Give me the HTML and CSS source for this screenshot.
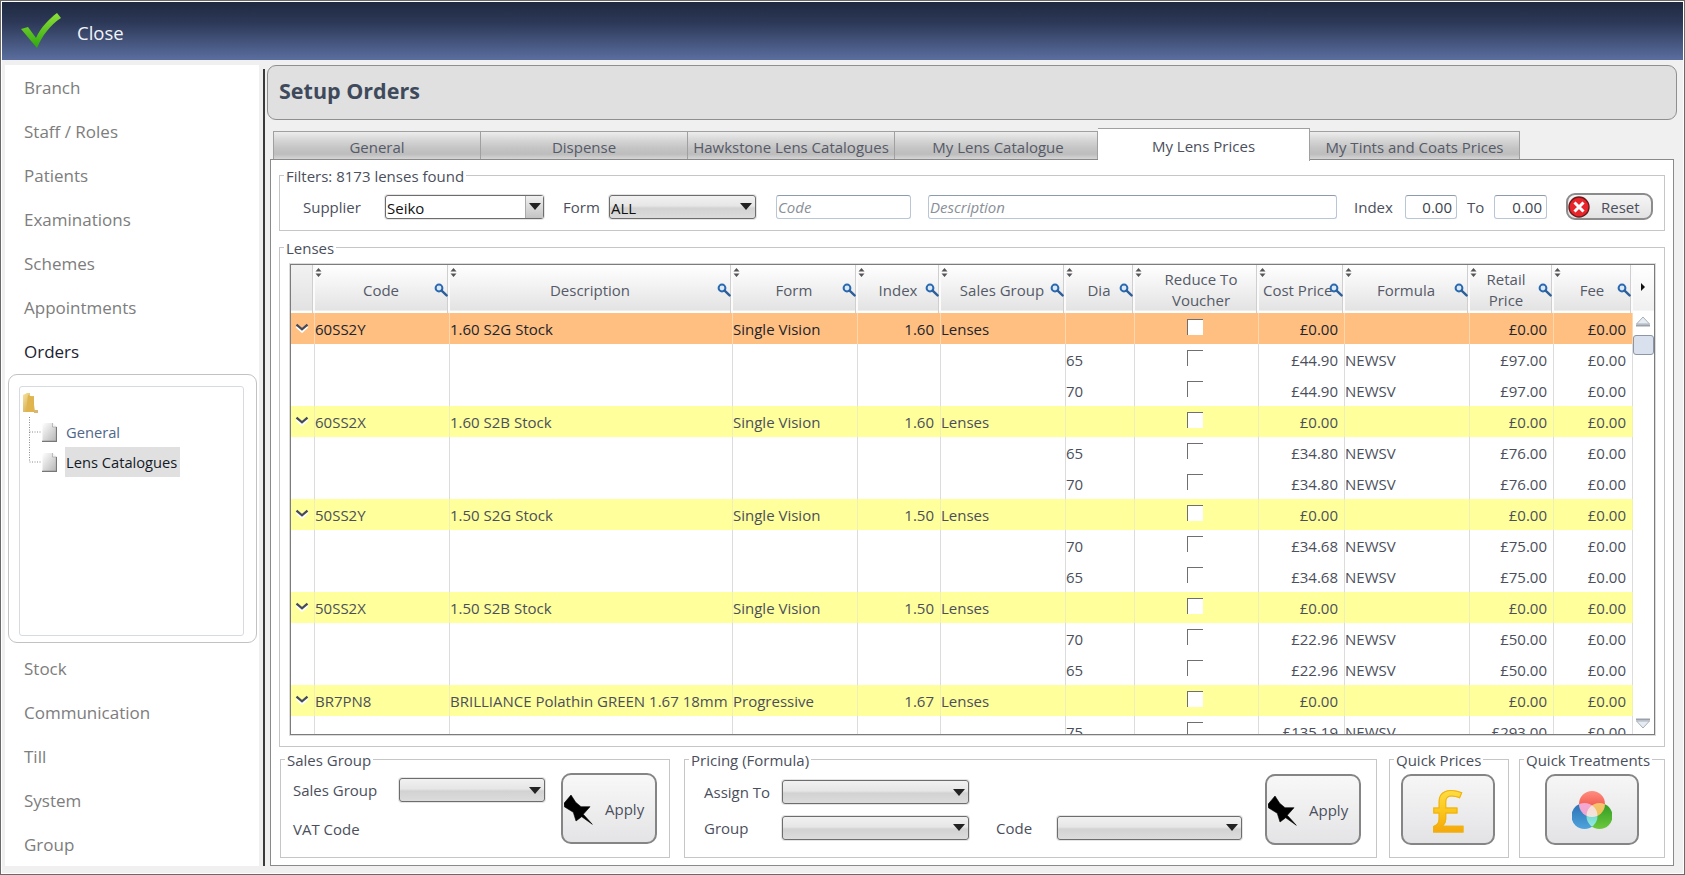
FILE: index.html
```html
<!DOCTYPE html>
<html lang="en">
<head>
<meta charset="utf-8">
<title>Setup Orders</title>
<link rel="stylesheet" href="styles.css">
</head>
<body>
<svg class="defs" width="0" height="0" aria-hidden="true">
  <defs>
    <linearGradient id="g-check" x1="0" y1="0" x2="0" y2="1"><stop offset="0" stop-color="#8fe03a"/><stop offset="1" stop-color="#2fa80c"/></linearGradient>
    <linearGradient id="g-folder" x1="0" y1="0" x2="1" y2="1"><stop offset="0" stop-color="#f8e3a0"/><stop offset="1" stop-color="#c99a35"/></linearGradient>
    <linearGradient id="g-doc" x1="0" y1="0" x2="1" y2="1"><stop offset="0" stop-color="#ffffff"/><stop offset="1" stop-color="#b4b4b4"/></linearGradient>
    <linearGradient id="g-red" x1="0" y1="0" x2="0" y2="1"><stop offset="0" stop-color="#ff8d80"/><stop offset="1" stop-color="#e8392f"/></linearGradient>
    <linearGradient id="g-blue" x1="0" y1="0" x2="0" y2="1"><stop offset="0" stop-color="#2a6fb5"/><stop offset="1" stop-color="#4ea4dc"/></linearGradient>
    <linearGradient id="g-green" x1="0" y1="0" x2="0" y2="1"><stop offset="0" stop-color="#2f9a22"/><stop offset="1" stop-color="#6cc83e"/></linearGradient>
    <symbol id="i-mag" viewBox="0 0 14 14"><circle cx="5" cy="5" r="3.4" fill="#dbe9f7" stroke="#2a69b0" stroke-width="2"/><path d="M7.6 7.6 L12.6 12.4" stroke="#2d5f9a" stroke-width="2.4" stroke-linecap="round"/></symbol>
    <symbol id="i-sort" viewBox="0 0 7 9"><path d="M3.5 0 L6.5 3.4 H0.5 Z M0.5 5.4 H6.5 L3.5 9 Z" fill="#555"/></symbol>
    <symbol id="i-chev" viewBox="0 0 14 10"><path d="M1.5 3.6 L7 8.6 L12.5 3.6" fill="none" stroke="#fff" stroke-width="2.4"/><path d="M1.5 1.6 L7 6.4 L12.5 1.6" fill="none" stroke="#454a5a" stroke-width="2.2"/></symbol>
    <symbol id="i-doc" viewBox="0 0 15 20"><path d="M0.5 1 H10.5 L14.5 5 V19.5 H0.5 Z" fill="url(#g-doc)"/><path d="M10.5 1 V5 H14.5" fill="#f4f4f4" stroke="#9a9a9a" stroke-width=".6"/><path d="M0 19.4 H15 M14.5 5 V19.5" stroke="#777" stroke-width="1.2"/></symbol>
    <symbol id="i-pin" viewBox="0 0 29 30"><path d="M7 0 L11.7 7.3 L17 11.7 L26 11.7 L19.3 19.3 L28.3 29.3 L17.7 21.7 L12 26 L9.3 17.3 L0.3 11.7 L0 8.3 Z" fill="#000" stroke="#000" stroke-width=".6" stroke-linejoin="round"/></symbol>
  </defs>
</svg>
<div class="window">
  <header class="topbar">
    <svg class="check" viewBox="0 0 40 35" width="40" height="35" aria-hidden="true"><path d="M0 16 L7 14 L15 25 C20 14 28 6 36 0 L40 5 C29 12 21 23 16 35 Z" fill="url(#g-check)"/></svg>
    <span class="close-label">Close</span>
  </header>
  <div class="body">
    <nav class="sidebar">
      <div class="nav-item">Branch</div>
      <div class="nav-item">Staff / Roles</div>
      <div class="nav-item">Patients</div>
      <div class="nav-item">Examinations</div>
      <div class="nav-item">Schemes</div>
      <div class="nav-item">Appointments</div>
      <div class="nav-item nav-active">Orders</div>
      <div class="tree-panel">
        <div class="tree-inner">
          <svg class="folder" viewBox="0 0 16 20" width="16" height="20" aria-hidden="true"><path d="M1 2 L5 0 H8 V3 L12 3 V19 H1 Z" fill="url(#g-folder)"/><path d="M6 2 L11 4 L13 19 H4 Z" fill="#e0b44e"/><path d="M12 17 H16 V20 H12 Z" fill="#d7b773"/></svg>
          <div class="tree-row">
            <svg class="conn" viewBox="0 0 13 30" width="13" height="30" aria-hidden="true"><path d="M.5 0 V30 M.5 15 H12" stroke="#888" stroke-dasharray="1 1.5" fill="none"/></svg>
            <svg class="doc" width="15" height="20" aria-hidden="true"><use href="#i-doc"/></svg>
            <span class="tree-label">General</span>
          </div>
          <div class="tree-row">
            <svg class="conn" viewBox="0 0 13 30" width="13" height="30" aria-hidden="true"><path d="M.5 0 V15 H12" stroke="#888" stroke-dasharray="1 1.5" fill="none"/></svg>
            <svg class="doc" width="15" height="20" aria-hidden="true"><use href="#i-doc"/></svg>
            <span class="tree-label tree-selected">Lens Catalogues</span>
          </div>
        </div>
      </div>
      <div class="nav-item">Stock</div>
      <div class="nav-item">Communication</div>
      <div class="nav-item">Till</div>
      <div class="nav-item">System</div>
      <div class="nav-item">Group</div>
    </nav>
    <div class="divider"></div>
    <main class="main">
      <div class="title-panel"><h1 class="title">Setup Orders</h1></div>
      <div class="tabs">
        <div class="tab tab-1">General</div>
        <div class="tab tab-2">Dispense</div>
        <div class="tab tab-3">Hawkstone Lens Catalogues</div>
        <div class="tab tab-4">My Lens Catalogue</div>
        <div class="tab tab-5 tab-active">My Lens Prices</div>
        <div class="tab tab-6">My Tints and Coats Prices</div>
      </div>
      <section class="panel">
        <fieldset class="group filters">
          <legend>Filters: 8173 lenses found</legend>
          <div class="filter-row">
            <span class="f-supplier">Supplier</span>
            <div class="combo combo-white c-supplier"><span class="combo-text">Seiko</span><span class="combo-btn"><i class="tri"></i></span></div>
            <span class="f-form">Form</span>
            <div class="combo c-form"><span class="combo-text">ALL</span><i class="tri"></i></div>
            <div class="input in-code">Code</div>
            <div class="input in-desc">Description</div>
            <span class="f-index">Index</span>
            <div class="input num in-from">0.00</div>
            <span class="f-to">To</span>
            <div class="input num in-to">0.00</div>
            <div class="reset">
              <svg viewBox="0 0 22 22" width="22" height="22" aria-hidden="true"><circle cx="11" cy="11" r="10" fill="#e8252b" stroke="#6b1a1c" stroke-width="1.4"/><path d="M6.5 6.5 L15.5 15.5 M15.5 6.5 L6.5 15.5" stroke="#fff" stroke-width="3"/></svg>
              <span>Reset</span>
            </div>
          </div>
        </fieldset>
        <fieldset class="group lenses">
          <legend>Lenses</legend>
          <div class="grid-box">
            <table class="grid">
              <colgroup><col class="w-exp"><col class="w-code"><col class="w-desc"><col class="w-form"><col class="w-index"><col class="w-sales"><col class="w-dia"><col class="w-red"><col class="w-cost"><col class="w-formula"><col class="w-retail"><col class="w-fee"></colgroup>
              <thead>
                <tr>
                  <th></th>
                  <th><svg class="sort"><use href="#i-sort"/></svg>Code<svg class="mag"><use href="#i-mag"/></svg></th>
                  <th><svg class="sort"><use href="#i-sort"/></svg>Description<svg class="mag"><use href="#i-mag"/></svg></th>
                  <th><svg class="sort"><use href="#i-sort"/></svg>Form<svg class="mag"><use href="#i-mag"/></svg></th>
                  <th><svg class="sort"><use href="#i-sort"/></svg>Index<svg class="mag"><use href="#i-mag"/></svg></th>
                  <th><svg class="sort"><use href="#i-sort"/></svg>Sales Group<svg class="mag"><use href="#i-mag"/></svg></th>
                  <th><svg class="sort"><use href="#i-sort"/></svg>Dia<svg class="mag"><use href="#i-mag"/></svg></th>
                  <th class="h-reduce"><svg class="sort"><use href="#i-sort"/></svg>Reduce To<br>Voucher</th>
                  <th><svg class="sort"><use href="#i-sort"/></svg><span class="left-head">Cost Price</span><svg class="mag"><use href="#i-mag"/></svg></th>
                  <th><svg class="sort"><use href="#i-sort"/></svg>Formula<svg class="mag"><use href="#i-mag"/></svg></th>
                  <th class="h-retail"><svg class="sort"><use href="#i-sort"/></svg>Retail<br>Price<svg class="mag"><use href="#i-mag"/></svg></th>
                  <th><svg class="sort"><use href="#i-sort"/></svg>Fee<svg class="mag"><use href="#i-mag"/></svg></th>
                </tr>
              </thead>
              <tbody>
                <tr class="sel"><td class="ctr"><svg class="chev"><use href="#i-chev"/></svg></td><td>60SS2Y</td><td>1.60 S2G Stock</td><td>Single Vision</td><td class="r">1.60</td><td>Lenses</td><td></td><td class="ctr"><i class="cb"></i></td><td class="r">£0.00</td><td></td><td class="r">£0.00</td><td class="r">£0.00</td></tr>
                <tr><td></td><td></td><td></td><td></td><td></td><td></td><td>65</td><td class="ctr"><i class="cb"></i></td><td class="r">£44.90</td><td>NEWSV</td><td class="r">£97.00</td><td class="r">£0.00</td></tr>
                <tr><td></td><td></td><td></td><td></td><td></td><td></td><td>70</td><td class="ctr"><i class="cb"></i></td><td class="r">£44.90</td><td>NEWSV</td><td class="r">£97.00</td><td class="r">£0.00</td></tr>
                <tr class="par"><td class="ctr"><svg class="chev"><use href="#i-chev"/></svg></td><td>60SS2X</td><td>1.60 S2B Stock</td><td>Single Vision</td><td class="r">1.60</td><td>Lenses</td><td></td><td class="ctr"><i class="cb"></i></td><td class="r">£0.00</td><td></td><td class="r">£0.00</td><td class="r">£0.00</td></tr>
                <tr><td></td><td></td><td></td><td></td><td></td><td></td><td>65</td><td class="ctr"><i class="cb"></i></td><td class="r">£34.80</td><td>NEWSV</td><td class="r">£76.00</td><td class="r">£0.00</td></tr>
                <tr><td></td><td></td><td></td><td></td><td></td><td></td><td>70</td><td class="ctr"><i class="cb"></i></td><td class="r">£34.80</td><td>NEWSV</td><td class="r">£76.00</td><td class="r">£0.00</td></tr>
                <tr class="par"><td class="ctr"><svg class="chev"><use href="#i-chev"/></svg></td><td>50SS2Y</td><td>1.50 S2G Stock</td><td>Single Vision</td><td class="r">1.50</td><td>Lenses</td><td></td><td class="ctr"><i class="cb"></i></td><td class="r">£0.00</td><td></td><td class="r">£0.00</td><td class="r">£0.00</td></tr>
                <tr><td></td><td></td><td></td><td></td><td></td><td></td><td>70</td><td class="ctr"><i class="cb"></i></td><td class="r">£34.68</td><td>NEWSV</td><td class="r">£75.00</td><td class="r">£0.00</td></tr>
                <tr><td></td><td></td><td></td><td></td><td></td><td></td><td>65</td><td class="ctr"><i class="cb"></i></td><td class="r">£34.68</td><td>NEWSV</td><td class="r">£75.00</td><td class="r">£0.00</td></tr>
                <tr class="par"><td class="ctr"><svg class="chev"><use href="#i-chev"/></svg></td><td>50SS2X</td><td>1.50 S2B Stock</td><td>Single Vision</td><td class="r">1.50</td><td>Lenses</td><td></td><td class="ctr"><i class="cb"></i></td><td class="r">£0.00</td><td></td><td class="r">£0.00</td><td class="r">£0.00</td></tr>
                <tr><td></td><td></td><td></td><td></td><td></td><td></td><td>70</td><td class="ctr"><i class="cb"></i></td><td class="r">£22.96</td><td>NEWSV</td><td class="r">£50.00</td><td class="r">£0.00</td></tr>
                <tr><td></td><td></td><td></td><td></td><td></td><td></td><td>65</td><td class="ctr"><i class="cb"></i></td><td class="r">£22.96</td><td>NEWSV</td><td class="r">£50.00</td><td class="r">£0.00</td></tr>
                <tr class="par"><td class="ctr"><svg class="chev"><use href="#i-chev"/></svg></td><td>BR7PN8</td><td>BRILLIANCE Polathin GREEN 1.67 18mm</td><td>Progressive</td><td class="r">1.67</td><td>Lenses</td><td></td><td class="ctr"><i class="cb"></i></td><td class="r">£0.00</td><td></td><td class="r">£0.00</td><td class="r">£0.00</td></tr>
                <tr><td></td><td></td><td></td><td></td><td></td><td></td><td>75</td><td class="ctr"><i class="cb"></i></td><td class="r">£135.19</td><td>NEWSV</td><td class="r">£293.00</td><td class="r">£0.00</td></tr>
              </tbody>
            </table>
            <div class="scroll">
              <div class="scroll-corner"><i class="corner-arrow"></i></div>
              <div class="scroll-track">
                <svg class="arrow" viewBox="0 0 16 11" width="16" height="11" aria-hidden="true"><path d="M8 1 L14.5 8 H1.5 Z" fill="#e6ecf3" stroke="#aab0b8"/><path d="M1 9.5 H15" stroke="#9aa1ab" stroke-width="2"/></svg>
                <div class="thumb"></div>
                <svg class="arrow arrow-end" viewBox="0 0 16 11" width="16" height="11" aria-hidden="true"><path d="M1 1.5 H15" stroke="#9aa1ab" stroke-width="2"/><path d="M1.5 3 H14.5 L8 10 Z" fill="#e6ecf3" stroke="#aab0b8"/></svg>
              </div>
            </div>
          </div>
        </fieldset>
        <div class="bottom-row">
          <fieldset class="group b-sales">
            <legend>Sales Group</legend>
            <div class="sales-grid">
              <span>Sales Group</span>
              <div class="combo"><i class="tri"></i></div>
              <div class="apply">
                <svg class="pin" width="29" height="30" aria-hidden="true"><use href="#i-pin"/></svg>
                <span>Apply</span>
              </div>
              <span class="vat">VAT Code</span>
            </div>
          </fieldset>
          <fieldset class="group b-pricing">
            <legend>Pricing (Formula)</legend>
            <div class="pricing-grid">
              <span class="p-assign">Assign To</span>
              <div class="combo p-assign-c"><i class="tri"></i></div>
              <span class="p-group">Group</span>
              <div class="combo p-group-c"><i class="tri"></i></div>
              <span class="p-code">Code</span>
              <div class="combo p-code-c"><i class="tri"></i></div>
              <div class="apply p-apply">
                <svg class="pin" width="29" height="30" aria-hidden="true"><use href="#i-pin"/></svg>
                <span>Apply</span>
              </div>
            </div>
          </fieldset>
          <fieldset class="group b-qp">
            <legend>Quick Prices</legend>
            <div class="quick q-price"><span class="pound">£</span></div>
          </fieldset>
          <fieldset class="group b-qt">
            <legend>Quick Treatments</legend>
            <div class="quick q-treat">
              <svg class="blend" viewBox="0 0 40 38" width="40" height="38" aria-hidden="true">
                <circle cx="20" cy="13" r="13" fill="url(#g-red)"/>
                <circle cx="12.5" cy="25" r="13" fill="url(#g-blue)"/>
                <circle cx="27.5" cy="25" r="13" fill="url(#g-green)"/>
              </svg>
            </div>
          </fieldset>
        </div>
      </section>
    </main>
  </div>
</div>
</body>
</html>
```
FILE: styles.css
```css
* { box-sizing: border-box; }
html, body { margin: 0; padding: 0; }
body {
  width: 1685px;
  height: 875px;
  overflow: hidden;
  background: #f0f0f0;
  font-family: "Open Sans", "Noto Sans", sans-serif;
  font-size: 15px;
  color: #4b4f5c;
}
.defs { position: absolute; }
.window {
  width: 1685px;
  height: 875px;
  border: 1px solid #6a6a6a;
  padding: 1px;
  background: #fff;
  display: flex;
  flex-direction: column;
}
.topbar {
  height: 58px;
  flex: none;
  background: linear-gradient(#1f2940, #2c3857 35%, #5a6e9e);
  display: flex;
  align-items: center;
  padding-left: 19px;
}
.check { margin-top: -1px; }
.close-label { margin-left: 16px; margin-top: 3px; color: #f2f4f8; font-size: 18.5px; }

.body {
  flex: 1;
  min-height: 0;
  display: flex;
  padding: 5px 6px 7px 3px;
  background: #f0f0f0;
}
.sidebar {
  width: 254px;
  flex: none;
  background: #fff;
  display: flex;
  flex-direction: column;
}
.nav-item {
  height: 44px;
  flex: none;
  padding-left: 19px;
  display: flex;
  align-items: center;
  font-size: 17px;
  color: #7d7d7d;
}
.nav-active { color: #1c2230; }
.tree-panel {
  height: 269px;
  margin: 1px 2px 3px 3px;
  border: 1px solid #c2c2c2;
  border-radius: 9px;
  padding: 11px 12px 6px 10px;
  flex: none;
}
.tree-inner {
  height: 100%;
  border: 1px solid #d6dbe2;
  border-radius: 3px;
  padding: 6px 0 0 2px;
}
.folder { display: block; margin-bottom: 4px; }
.tree-row {
  height: 30px;
  display: flex;
  align-items: center;
  margin-left: 7px;
}
.conn { flex: none; }
.doc { flex: none; }
.tree-label { margin-left: 8px; padding: 0 1px; line-height: 30px; font-size: 14.7px; color: #4f6788; }
.tree-selected { background: #e0e0e0; color: #141a28; padding-right: 3px; }

.divider {
  width: 2px;
  flex: none;
  margin: 4px 2px 0 4px;
  background: #3a3a3a;
}
.main {
  flex: 1;
  min-width: 0;
  display: flex;
  flex-direction: column;
}
.title-panel {
  height: 55px;
  flex: none;
  background: #e0e0e0;
  border: 1px solid #8f8f8f;
  border-radius: 9px;
  display: flex;
  align-items: center;
  padding: 0 0 4px 11px;
}
.title { margin: 0; font-size: 21.5px; font-weight: 700; color: #3e4a5c; }

.tabs {
  height: 32px;
  margin-top: 8px;
  padding-left: 6px;
  display: flex;
  align-items: flex-start;
  flex: none;
  margin-bottom: -1px;
  position: relative;
  z-index: 1;
}
.tab {
  height: 28px;
  margin-top: 3px;
  border: 1px solid #a0a0a0;
  border-bottom: 0;
  border-left-width: 0;
  display: flex;
  align-items: center;
  justify-content: center;
  white-space: nowrap;
  padding-top: 3px;
  background: linear-gradient(#ededed, #d6d6d6 30%, #c4c4c4 60%, #bdbdbd 82%, #d6d6d6);
  color: #555a68;
}
.tab-1 { width: 208px; border-left-width: 1px; }
.tab-2 { width: 207px; }
.tab-3 { width: 207px; }
.tab-4 { width: 203px; padding-left: 4px; }
.tab-5 { width: 212px; }
.tab-6 { width: 210px; }
.tab-active {
  height: 33px;
  margin-top: 0;
  padding-top: 1px;
  background: #fff;
  color: #4b4f5c;
}
.panel {
  flex: none;
  height: 707px;
  margin: 0 3px 0 3px;
  background: #fff;
  border: 1px solid #8a8a8a;
  padding: 5px 8px 7px 8px;
  display: flex;
  flex-direction: column;
}

.group {
  margin: 0;
  padding: 0;
  min-width: 0;
  border: 1px solid #c6c6c6;
}
.group legend {
  margin-left: 4px;
  padding: 1px 2px 0 2px;
  height: 20px;
  line-height: 20px;
  color: #4b4f5c;
}
.filters { height: 66px; flex: none; padding-top: 8px; }
.filter-row { display: flex; align-items: center; height: 27px; padding-left: 23px; }
.f-supplier { width: 82px; flex: none; }
.c-supplier { width: 159px; }
.f-form { margin-left: 19px; width: 46px; flex: none; }
.c-form { width: 147px; }
.in-code { width: 135px; margin-left: 20px; }
.in-desc { width: 409px; margin-left: 17px; }
.f-index { width: 51px; margin-left: 17px; flex: none; }
.in-from { width: 52px; }
.f-to { width: 27px; margin-left: 10px; flex: none; }
.in-to { width: 53px; }

.combo {
  height: 24px;
  flex: none;
  border: 1px solid #6d6d6d;
  border-radius: 3px;
  display: flex;
  align-items: center;
  justify-content: flex-end;
  padding-right: 3px;
  background: linear-gradient(#f1f1f1, #e6e6e6 45%, #d2d2d2 55%, #dcdcdc);
  box-shadow: 0 0 0 1px rgba(150,150,150,.25);
}
.combo-text { margin-right: auto; padding-left: 1px; color: #111; line-height: 22px; padding-top: 2px; }
.combo-white { background: #fff; padding-right: 0; }
.combo-btn {
  width: 18px;
  height: 100%;
  background: linear-gradient(#f0f0f0, #c4c4c4);
  border-left: 1px solid #aaa;
  display: flex;
  align-items: center;
  justify-content: center;
}
.tri {
  display: block;
  width: 0;
  height: 0;
  border-left: 6px solid transparent;
  border-right: 6px solid transparent;
  border-top: 7px solid #222;
}
.input {
  height: 24px;
  flex: none;
  border: 1px solid #b9c6d6;
  border-top-color: #8d9cad;
  border-radius: 3px;
  padding: 0 1px;
  display: flex;
  align-items: center;
  font-style: italic;
  color: #8a8f98;
  background: #fff;
}
.num { justify-content: flex-end; font-style: normal; color: #3a3f4c; padding-right: 4px; }
.reset {
  width: 87px;
  height: 27px;
  margin-left: 19px;
  flex: none;
  border: 2px solid #8c8c8c;
  border-radius: 9px;
  background: linear-gradient(#f6f6f6, #e2e2e2);
  display: flex;
  align-items: center;
}
.reset span { margin-left: 11px; }

.lenses { height: 510px; flex: none; margin-top: 6px; padding: 7px 9px 11px 10px; }
.lenses legend { margin-left: -6px; }
.grid-box {
  height: 471px;
  border: 1px solid #7c7c7c;
  box-shadow: 0 0 0 1px #dcdcdc;
  display: flex;
  overflow: hidden;
  background: #fff;
}
.grid {
  width: 1342px;
  flex: none;
  table-layout: fixed;
  border-collapse: separate;
  border-spacing: 0;
  align-self: flex-start;
}
.w-exp { width: 24px; } .w-code { width: 135px; } .w-desc { width: 283px; } .w-form { width: 125px; }
.w-index { width: 83px; } .w-sales { width: 125px; } .w-dia { width: 69px; } .w-red { width: 124px; }
.w-cost { width: 86px; } .w-formula { width: 125px; } .w-retail { width: 84px; } .w-fee { width: 79px; }
.grid th {
  height: 48px;
  position: relative;
  padding: 3px 1px 0 0;
  font-weight: 400;
  line-height: 21px;
  text-align: center;
  color: #555a68;
  background: linear-gradient(#ffffff, #f2f2f2 45%, #e3e3e3 94%, #ffffff 96%);
  border-right: 2px solid #fbfbfb;
  box-shadow: inset -1px 0 0 #cfcfcf;
  white-space: nowrap;
}
.grid th:first-child { background: linear-gradient(#f2f2f2, #e2e2e2 94%, #fff 96%); }
.grid th.h-reduce { padding: 1px 0 0 10px; }
.grid th.h-retail { padding: 1px 10px 0 0; }
.sort { position: absolute; left: 0; top: 3px; width: 7px; height: 9px; }
.mag { position: absolute; right: 0; top: 18px; width: 14px; height: 14px; }
.left-head { display: block; text-align: left; padding-left: 4px; }
.grid td {
  height: 31px;
  padding: 0 2px 0 0;
  white-space: nowrap;
  overflow: hidden;
  border-right: 1px solid #dcdcdc;
  line-height: 30px;
}
.grid td.r { text-align: right; padding-right: 6px; }
.grid td.ctr { text-align: center; padding: 0; }
.par td { background: #ffff9b; border-right-color: #f0f0b4; }
.sel td { background: #ffbf80; border-right-color: #ffd7ae; color: #20242e; }
.chev { width: 14px; height: 10px; display: block; margin: -2px 0 0 4px; }
.cb {
  display: block;
  width: 16px;
  height: 16px;
  margin: -3px auto 0;
  background: #fff;
  border-top: 1px solid #6f6f6f;
  border-left: 1px solid #6f6f6f;
  transform: translateX(-2px);
}

.scroll { flex: 1; display: flex; flex-direction: column; }
.scroll-corner {
  height: 48px;
  flex: none;
  padding: 18px 0 0 8px;
  background: linear-gradient(#ffffff, #f0f0f0 94%, #fff 96%);
}
.corner-arrow {
  display: block;
  width: 0;
  height: 0;
  border-top: 4px solid transparent;
  border-bottom: 4px solid transparent;
  border-left: 4px solid #111;
}
.scroll-track { flex: 1; display: flex; flex-direction: column; padding: 3px 0 5px 0; }
.arrow { display: block; flex: none; margin-left: 2px; }
.arrow-end { margin-top: auto; }
.thumb {
  width: 21px;
  height: 20px;
  margin-top: 8px;
  background: #d9e0ee;
  border: 1px solid #8c96a6;
  border-radius: 3px;
}

.bottom-row { display: flex; margin-top: 2px; flex: none; height: 109px; padding-left: 1px; }
.b-sales { width: 390px; padding-top: 4px; }
.b-pricing { width: 693px; margin-left: 14px; padding-top: 5px; }
.b-qp { width: 120px; margin-left: 12px; padding-top: 5px; }
.b-qt { width: 146px; margin-left: 10px; padding-top: 5px; }
.sales-grid {
  display: grid;
  margin-left: 12px;
  grid-template-columns: 106px 146px 112px;
  grid-template-rows: 34px 37px;
  align-items: center;
}
.sales-grid .combo { margin-top: 0; }
.sales-grid .apply { grid-column: 3; grid-row: 1 / span 2; margin-left: 16px; width: 96px; }
.vat { grid-column: 1; grid-row: 2; padding-top: 7px; }
.apply {
  height: 71px;
  border: 2px solid #858585;
  border-radius: 10px;
  background: linear-gradient(#f8f8f8, #e4e4e6);
  display: flex;
  align-items: center;
  padding-left: 1px;
}
.apply span { margin-left: 12px; margin-top: 0; }
.pin { flex: none; margin-top: 3px; }
.pricing-grid {
  display: grid;
  margin-left: 19px;
  grid-template-columns: 78px 187px 27px 61px 185px 23px 96px;
  grid-template-rows: 36px 35px;
  align-items: center;
}
.p-assign { grid-column: 1; grid-row: 1; }
.p-assign-c { grid-column: 2; grid-row: 1; }
.p-group { grid-column: 1; grid-row: 2; }
.p-group-c { grid-column: 2; grid-row: 2; }
.p-code { grid-column: 4; grid-row: 2; }
.p-code-c { grid-column: 5; grid-row: 2; }
.p-apply { grid-column: 7; grid-row: 1 / span 2; }
.quick {
  width: 94px;
  height: 71px;
  border: 2px solid #858585;
  border-radius: 10px;
  background: linear-gradient(#f6f6f6, #e3e3e6);
  display: flex;
  align-items: center;
  justify-content: center;
}
.q-price { margin-left: 11px; }
.q-treat { margin-left: 25px; }
.pound {
  font-family: "Open Sans", sans-serif;
  font-weight: 600;
  font-size: 58px;
  line-height: 62px;
  background: linear-gradient(#ffe95a, #fbc81e 50%, #f39a05);
  -webkit-background-clip: text;
  background-clip: text;
  color: transparent;
  -webkit-text-stroke: 1px #efb210;
}
.blend { isolation: isolate; }
.blend circle { mix-blend-mode: screen; }
```
